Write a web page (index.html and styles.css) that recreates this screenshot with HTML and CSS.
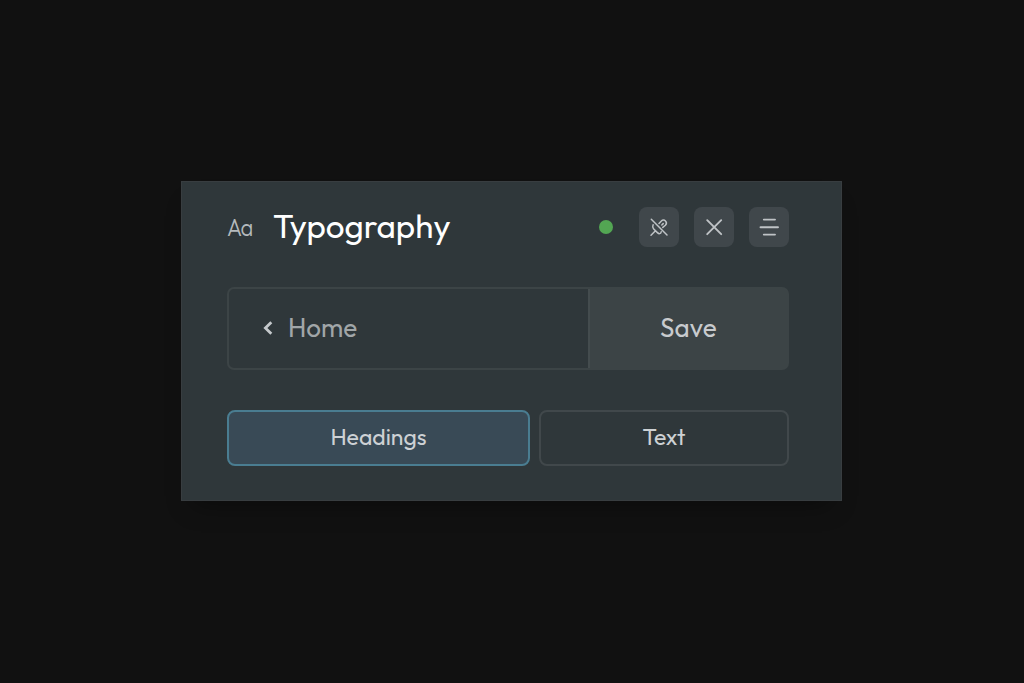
FILE: index.html
```html
<!DOCTYPE html>
<html lang="en">
<head>
<meta charset="utf-8">
<title>Typography</title>
<link rel="stylesheet" href="styles.css">
</head>
<body>
<main class="panel">
  <header class="header">
    <span class="type-icon">Aa</span>
    <h1 class="title">Typography</h1>
    <span class="status"></span>
    <div class="actions">
      <button class="icon-button" aria-label="Unpin">
        <svg width="40" height="40" viewBox="0 0 40 40"><path d="M12.3 12.3 28 28M12 28.2 16.2 24M14.1 17.8C13.4 19.6 13.5 20.7 14.5 21.7L18.4 25.6C19.8 27 21.7 27.2 22.2 24.8M20 16.5 22.4 14C25 11.2 29.2 15.3 26.4 18.2L23.8 20.4M22.8 18 24.2 16.6" stroke-width="1.5"/></svg>
      </button>
      <button class="icon-button" aria-label="Close">
        <svg width="40" height="40" viewBox="0 0 40 40"><path d="M13.2 13.2 27.2 27.2M27.2 13.2 13.2 27.2" stroke-width="1.9"/></svg>
      </button>
      <button class="icon-button" aria-label="Menu">
        <svg width="40" height="40" viewBox="0 0 40 40"><path d="M14.8 12.6H26M11.5 20.2H29M14.8 27.6H26" stroke-width="1.9"/></svg>
      </button>
    </div>
  </header>
  <nav class="toolbar">
    <button class="home">
      <svg class="chevron" width="10" height="14" viewBox="0 0 10 14"><path d="M8.3 1.2 2.4 7 8.3 12.8" stroke-width="2.8"/></svg>
      <span>Home</span>
    </button>
    <button class="save"><span>Save</span></button>
  </nav>
  <div class="tabs">
    <button class="tab tab-active"><span>Headings</span></button>
    <button class="tab"><span>Text</span></button>
  </div>
</main>
</body>
</html>
```
FILE: styles.css
```css
* { box-sizing: border-box; }
body {
  margin: 0;
  height: 683px;
  display: flex;
  align-items: flex-start;
  padding: 181px 0 0 181px;
  background: #111;
  font-family: Outfit, Lato, sans-serif;
  overflow: hidden;
}
button {
  margin: 0;
  padding: 0;
  border: 0;
  background: none;
  color: inherit;
  font: inherit;
}
svg { display: block; fill: none; stroke: #bfc3c6; stroke-linecap: round; stroke-linejoin: round; }
.panel {
  width: 661px;
  height: 320px;
  padding: 25px 52px 0 45px;
  border: 1px solid #383d40;
  background: #2f373a;
  box-shadow: 0 15px 24px -12px rgba(0, 0, 0, .4);
}
.header { display: flex; align-items: center; height: 40px; }
.type-icon {
  width: 46px;
  color: #b5babd;
  font-size: 24px;
  font-weight: 300;
  letter-spacing: -1px;
  transform: scaleX(.91);
  transform-origin: left;
}
.title {
  margin: 0;
  color: #fff;
  font-size: 33.2px;
  font-weight: 400;
  line-height: 38px;
  padding-bottom: 2px;
}
.status { width: 14px; height: 14px; margin-left: auto; border-radius: 50%; background: #53a653; }
.actions { display: flex; gap: 15px; margin-left: 26px; }
.icon-button { width: 40px; height: 40px; border-radius: 8px; background: #40474b; }
.toolbar {
  display: flex;
  height: 83px;
  margin-top: 40px;
  border: 2px solid #3c4446;
  border-radius: 7px;
  font-size: 26px;
}
.home { display: flex; align-items: center; flex: 1; gap: 15px; padding: 0 0 1px 34px; color: #a1a6a8; }
.home span, .save span { padding-bottom: 1px; }
.chevron { stroke: #c5c9cc; stroke-linecap: butt; stroke-linejoin: miter; }
.save { width: 199px; padding-bottom: 2px; border-left: 2px solid #444c4e; background: #3c4446; color: #c8cbce; letter-spacing: .2px; }
.tabs { display: grid; grid-template-columns: 303px 1fr; gap: 9px; margin-top: 40px; }
.tab {
  height: 56px;
  padding-bottom: 4px;
  border: 2px solid #41484b;
  border-radius: 8px;
  color: #cdd1d4;
  font-size: 23px;
}
.tab-active { border-color: #4a7d91; background: #394a56; }
```
